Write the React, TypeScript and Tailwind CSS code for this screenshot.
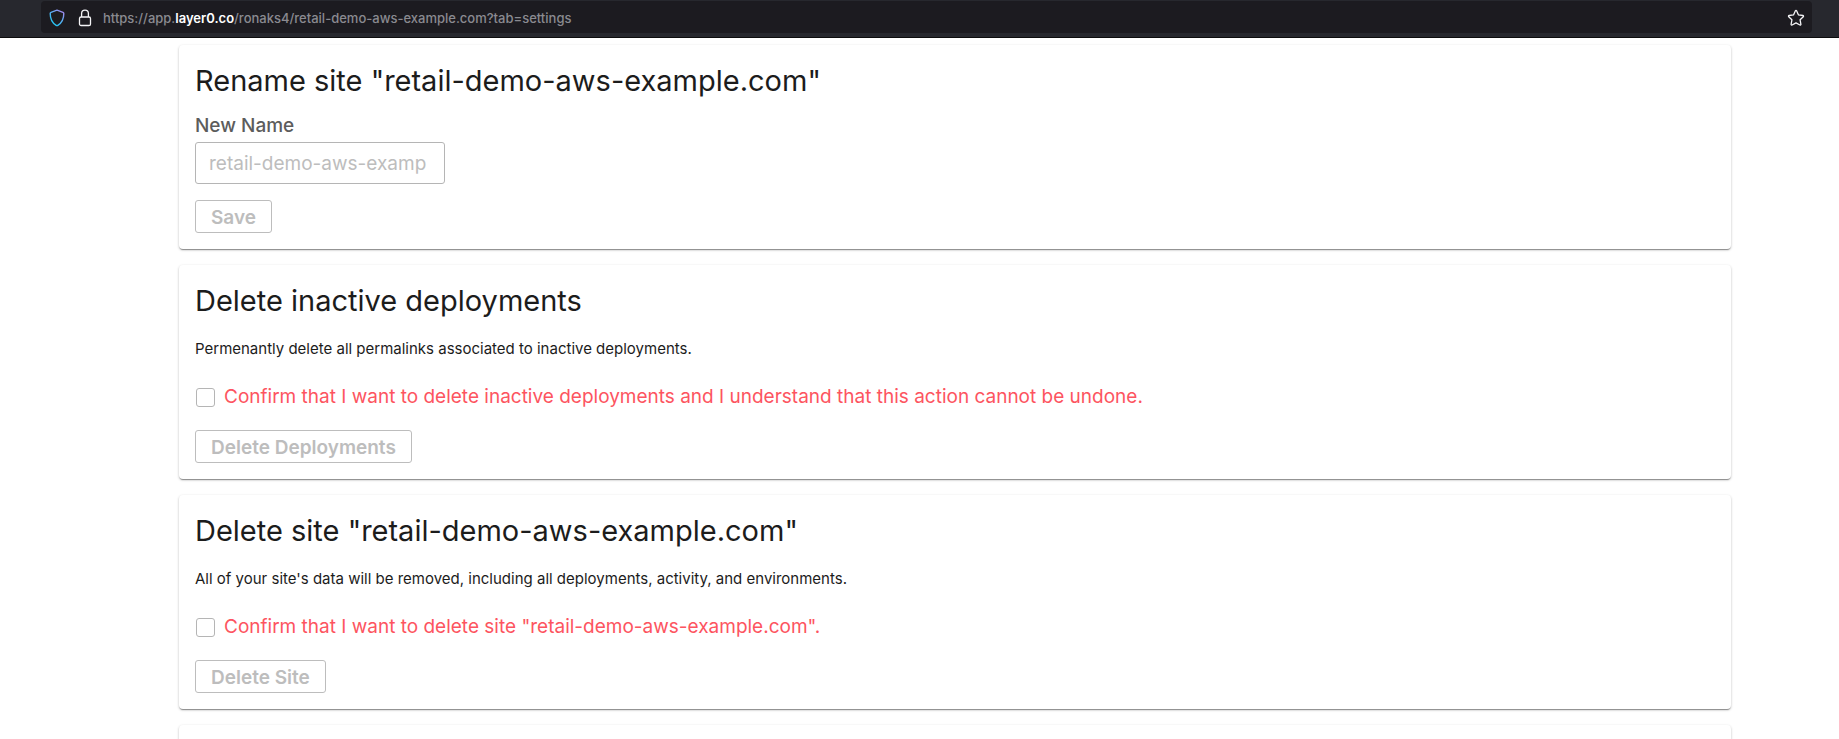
import type { ReactNode } from 'react';

const SITE = 'retail-demo-aws-example.com';

function ShieldIcon() {
  return (
    <svg viewBox="0 0 16 18" className="h-[18px] w-4" fill="none" aria-hidden="true">
      <defs>
        <linearGradient id="shield" x1="3" y1="14" x2="13" y2="2" gradientUnits="userSpaceOnUse">
          <stop offset="0" stopColor="#22c4f0" />
          <stop offset="0.6" stopColor="#62a8f2" />
          <stop offset="1" stopColor="#a088ee" />
        </linearGradient>
      </defs>
      <path
        d="M8 1.2 14 3.4c.5.2.8.6.8 1.1 0 5.200-1.800 9.300-6 11.900a1.500 1.500 0 0 1-1.600 0C3 13.800 1.200 9.700 1.200 4.500c0-.5.3-.9.8-1.100Z"
        stroke="url(#shield)"
        strokeWidth="1.400"
        strokeLinejoin="round"
      />
    </svg>
  );
}

function LockIcon() {
  return (
    <svg viewBox="0 0 14 18" className="h-[18px] w-3.5" fill="none" stroke="#f4f4f6" strokeWidth="1.300" aria-hidden="true">
      <rect x="1.500" y="8" width="11" height="8.500" rx="1.600" />
      <path d="M3.600 8V4.600a3.400 3.400 0 0 1 6.800 0V8" />
    </svg>
  );
}

function StarIcon() {
  return (
    <svg viewBox="0 0 18 18" className="size-[18px]" fill="none" stroke="#f4f4f6" strokeWidth="1.300" strokeLinejoin="round" aria-hidden="true">
      <path d="M8.400 1.800a.7.7 0 0 1 1.200 0l1.900 4.100 4.400.6a.7.7 0 0 1 .4 1.200l-3.200 3.100.8 4.500a.7.7 0 0 1-1 .7L9 13.900 5.100 16a.7.7 0 0 1-1-.7l.8-4.500-3.200-3.100a.7.7 0 0 1 .4-1.200l4.400-.6Z" />
    </svg>
  );
}

function AddressBar() {
  return (
    <header className="h-[38px] border-b border-[#0c0c0d] bg-[#27282e] pt-px pr-[27px] pl-[41px]">
      <div className="flex h-8 items-center rounded bg-[#1c1b20] pt-0.5 pr-[7px] pl-2">
        <ShieldIcon />
        <span className="ml-[13px]">
          <LockIcon />
        </span>
        <p className="ml-[11px] flex-1 text-[13px] leading-5 font-medium text-[#8a8a90]">
          https://app.<span className="font-semibold text-white">layer0.co</span>/ronaks4/{SITE}?tab=settings
        </p>
        <button type="button" aria-label="Bookmark this page">
          <StarIcon />
        </button>
      </div>
    </header>
  );
}

function Card({ title, children }: { title: string; children?: ReactNode }) {
  return (
    <section className="rounded-[4px] bg-white px-4 pt-4 pb-4 shadow-[0_2px_1px_-1px_rgba(0,0,0,0.25),0_1px_1px_0_rgba(0,0,0,0.16),0_1px_3px_0_rgba(0,0,0,0.2)]">
      <h2 className="text-[29px] leading-10">{title}</h2>
      {children}
    </section>
  );
}

function ActionButton({ children }: { children: ReactNode }) {
  return (
    <button
      type="button"
      disabled
      className="block h-[33px] rounded-[3px] border border-[#bdbdbd] px-[15px] pt-0.5 text-[19px] leading-6 font-semibold text-[#bdbdbd]"
    >
      {children}
    </button>
  );
}

function DangerCard({ title, description, confirm, action }: { title: string; description: string; confirm: string; action: string }) {
  return (
    <Card title={title}>
      <p className="mt-4 text-[15px] leading-6">{description}</p>
      <label className="mt-6 flex items-center gap-[9px] pl-px text-[19px] leading-6 text-[#fd5460]">
        <input type="checkbox" className="size-[19px] appearance-none rounded-[3px] border border-[#b5b5b5] bg-white" />
        {confirm}
      </label>
      <div className="mt-[21px]">
        <ActionButton>{action}</ActionButton>
      </div>
    </Card>
  );
}

export default function App() {
  return (
    <div className="h-screen overflow-hidden bg-white font-['Inter',sans-serif] text-[#1c1c1c]">
      <AddressBar />
      <main className="mr-[108px] ml-[179px] flex flex-col gap-4 pt-[7px]">
        <Card title={`Rename site "${SITE}"`}>
          <label htmlFor="new-name" className="mt-[13px] block text-[19px] leading-6 font-medium text-[#5c5c5c]">
            New Name
          </label>
          <input
            id="new-name"
            type="text"
            placeholder={SITE}
            className="mt-1 mb-4 block h-[42px] w-[250px] rounded-[3px] border border-[#b5b5b5] pr-[17px] pl-[13px] text-[19px] placeholder:text-[#bdbdbd]"
          />
          <ActionButton>Save</ActionButton>
        </Card>
        <DangerCard
          title="Delete inactive deployments"
          description="Permenantly delete all permalinks associated to inactive deployments."
          confirm="Confirm that I want to delete inactive deployments and I understand that this action cannot be undone."
          action="Delete Deployments"
        />
        <DangerCard
          title={`Delete site "${SITE}"`}
          description="All of your site's data will be removed, including all deployments, activity, and environments."
          confirm={`Confirm that I want to delete site "${SITE}".`}
          action="Delete Site"
        />
        <section className="h-40 rounded-[4px] bg-white shadow-[0_2px_1px_-1px_rgba(0,0,0,0.25),0_1px_1px_0_rgba(0,0,0,0.16),0_1px_3px_0_rgba(0,0,0,0.2)]" />
      </main>
    </div>
  );
}
